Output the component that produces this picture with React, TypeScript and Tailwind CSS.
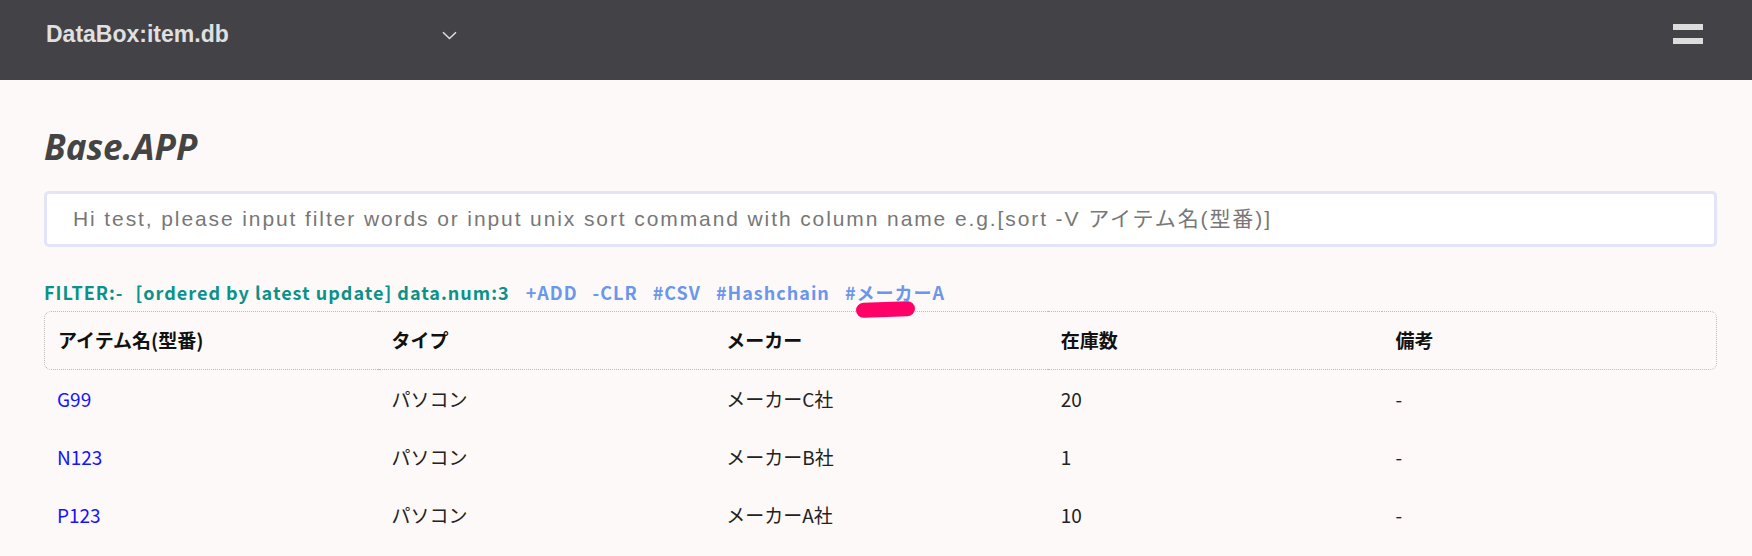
const columns = ["アイテム名(型番)", "タイプ", "メーカー", "在庫数", "備考"];

const items = [
  { name: "G99", type: "パソコン", maker: "メーカーC社", stock: "20", note: "-" },
  { name: "N123", type: "パソコン", maker: "メーカーB社", stock: "1", note: "-" },
  { name: "P123", type: "パソコン", maker: "メーカーA社", stock: "10", note: "-" },
];

const links = ["+ADD", "-CLR", "#CSV", "#Hashchain", "#メーカーA"];

const cjk = "font-['Noto_Sans_CJK_JP',sans-serif]";

const App = () => {
  return (
    <div className={`min-h-[556px] w-full bg-[#fdf9f8] ${cjk}`}>
      <header className="flex h-20 items-center bg-[#434247] pb-[12px] pl-[46px] pr-[49px]">
        <div className="flex items-center">
          <span className="w-[396px] font-['Liberation_Sans',sans-serif] text-[23px] font-bold leading-[28px] text-[#e0e0e0]">
            DataBox:item.db
          </span>
          <svg width="15" height="9" viewBox="0 0 15 9" className="mt-[2px]">
            <path d="M1 1.2 L7.5 7.5 L14 1.2" fill="none" stroke="#dcdcdc" strokeWidth="1.6" />
          </svg>
        </div>
        <div className="ml-auto flex flex-col gap-[8px]">
          <span className="block h-[6px] w-[30px] bg-[#dcdcdc]" />
          <span className="block h-[6px] w-[30px] bg-[#dcdcdc]" />
        </div>
      </header>

      <main className="pl-[44px] pr-[35px]">
        <h1 className="mt-[47px] font-['Noto_Sans',sans-serif] text-[35px] font-bold italic leading-[40px] text-[#444]">
          Base.APP
        </h1>

        <input
          className="mt-[24px] block h-[56px] w-full rounded-[5px] border-[3px] border-[#e4e4f8] bg-white pl-[26px] font-['Liberation_Sans','Noto_Sans_CJK_JP',sans-serif] text-[21px] tracking-[1.9px] outline-none placeholder:text-[#777]"
          placeholder="Hi test, please input filter words or input unix sort command with column name e.g.[sort -V アイテム名(型番)]"
        />

        <div className="mt-[33px] flex items-center text-[18px] font-bold leading-[24px] tracking-[1px]">
          <span className="text-[#0b918a]">FILTER:-</span>
          <span className="ml-[12px] text-[#0b918a]">[ordered by latest update] data.num:3</span>
          <div className="ml-[16px] flex gap-[15px] text-[#6a96ec]">
            {links.map((link) => (
              <span key={link} className="relative inline-block cursor-pointer">
                {link}
                {link === "#メーカーA" && (
                  <span className="absolute left-[11px] top-[22px] z-10 h-[15px] w-[59px] -rotate-2 rounded-full bg-[#ff0066]" />
                )}
              </span>
            ))}
          </div>
        </div>

        <table className="mt-[7px] w-full table-fixed border-separate border-spacing-0 text-[19px]">
          <thead>
            <tr>
              {columns.map((col, i) => (
                <th
                  key={col}
                  className={`h-[59px] border-y border-dotted border-[#bbb] pl-[13px] text-left font-bold text-[#111] ${
                    i === 0 ? "rounded-l-[7px] border-l" : ""
                  } ${i === columns.length - 1 ? "rounded-r-[7px] border-r" : ""}`}
                >
                  {col}
                </th>
              ))}
            </tr>
          </thead>
          <tbody>
            {items.map((item) => (
              <tr key={item.name} className="h-[58px] text-[#222]">
                <td className="pl-[13px] text-[#1414ff]">{item.name}</td>
                <td className="pl-[13px]">{item.type}</td>
                <td className="pl-[13px]">{item.maker}</td>
                <td className="pl-[13px]">{item.stock}</td>
                <td className="pl-[13px]">{item.note}</td>
              </tr>
            ))}
          </tbody>
        </table>
      </main>
    </div>
  );
};

export default App;
